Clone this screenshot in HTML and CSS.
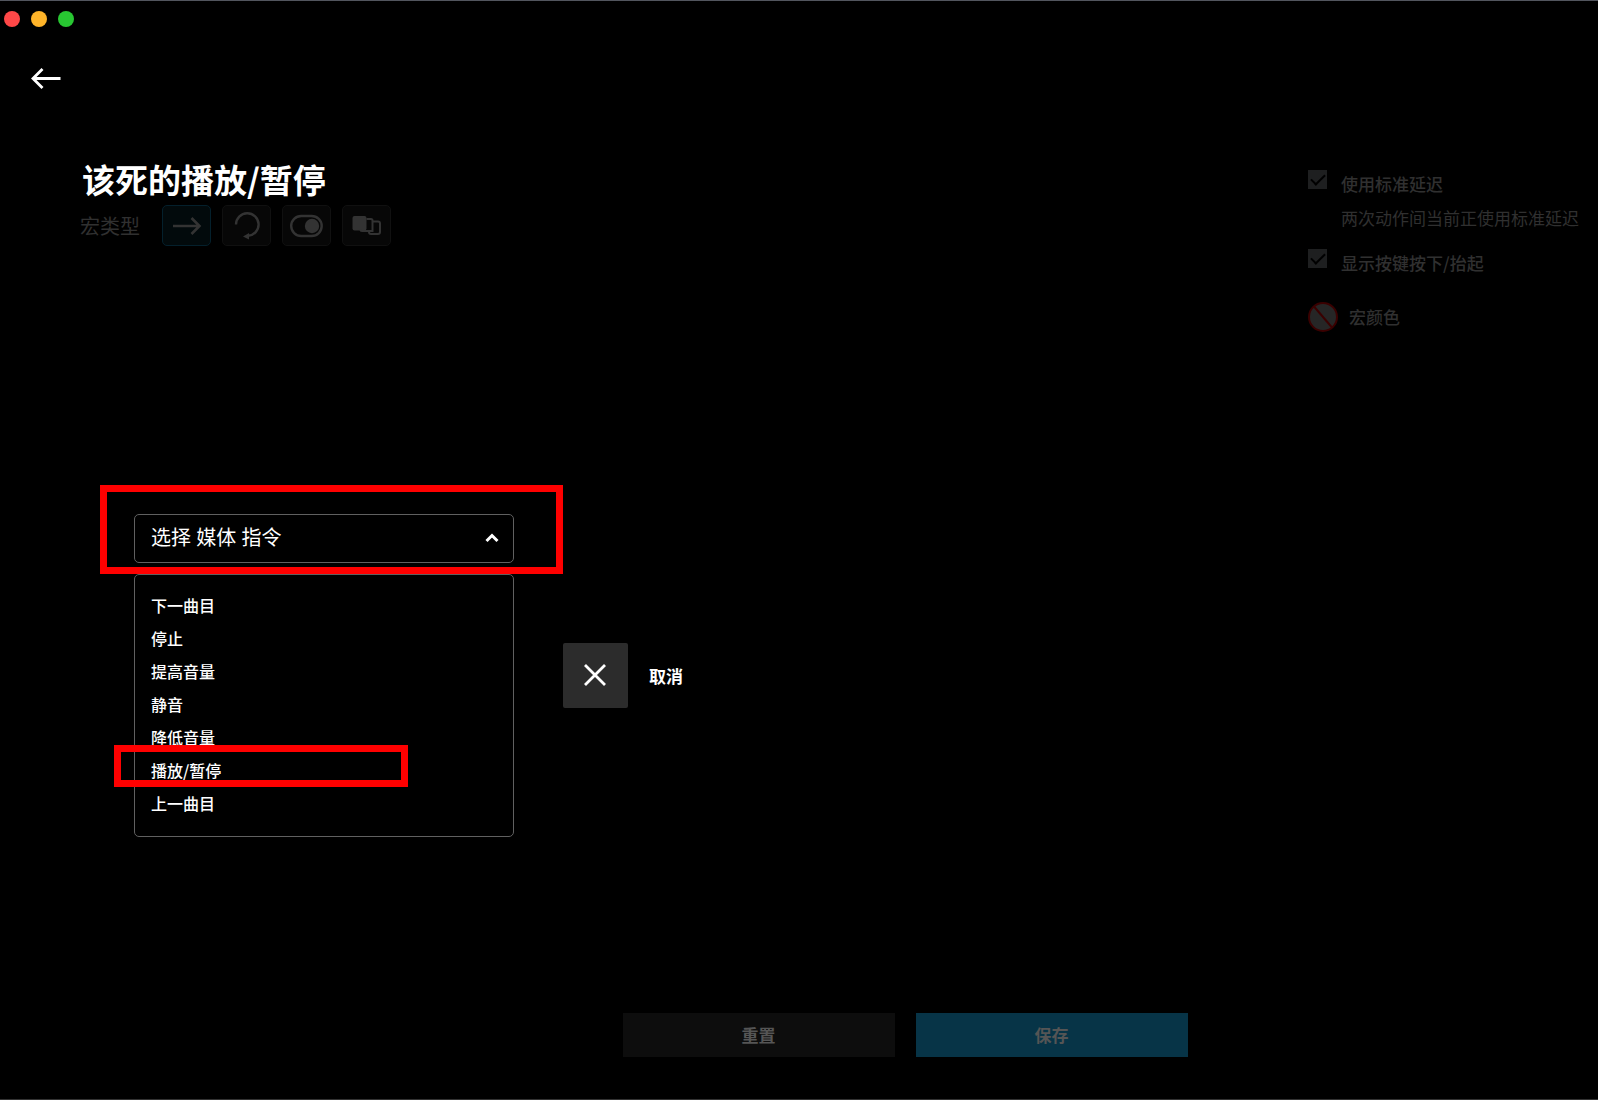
FILE: index.html
```html
<!DOCTYPE html>
<html lang="zh-CN">
<head>
    <meta charset="UTF-8">
    <meta name="viewport" content="width=device-width, initial-scale=1.0">
    <title>宏编辑</title>
    <link rel="stylesheet" href="styles.css">
</head>
<body>
    <div class="window">
        <header class="topbar">
            <div class="traffic">
                <span class="dot dot-close"></span>
                <span class="dot dot-min"></span>
                <span class="dot dot-max"></span>
            </div>
            <button type="button" class="back" aria-label="返回">
                <svg width="30" height="22" viewBox="0 0 30 22" fill="none" stroke="#fff" stroke-width="2.8"><path d="M29.500 10.500H2M11.500 1L2 10.500l9.500 9.500"/></svg>
            </button>
        </header>

        <main>
            <div class="info">
                <section class="macro">
                    <h1>该死的播放/暂停</h1>
                    <div class="types">
                        <span class="types-label">宏类型</span>
                        <button type="button" class="type active" aria-label="不重复">
                            <svg width="30" height="20" viewBox="0 0 30 20" fill="none" stroke="#333" stroke-width="2.600"><path d="M1 10h27M19.500 2L27.500 10l-8 8"/></svg>
                        </button>
                        <button type="button" class="type" aria-label="按住时重复">
                            <svg width="28" height="30" viewBox="0 0 28 30" fill="none" stroke="#333" stroke-width="2.400"><path d="M3 13.500a11.300 11.300 0 1 1 12 11.300"/><path d="M10 25.500l6-3.500v6.500z" fill="#333" stroke="none"/></svg>
                        </button>
                        <button type="button" class="type" aria-label="切换">
                            <svg width="34" height="24" viewBox="0 0 34 24" fill="none" stroke="#333" stroke-width="2.400"><rect x="1.200" y="2" width="30.500" height="20" rx="10"/><circle cx="22" cy="12" r="7.200" fill="#333" stroke="none"/></svg>
                        </button>
                        <button type="button" class="type" aria-label="序列">
                            <svg width="30" height="22" viewBox="0 0 30 22" fill="none" stroke="#333" stroke-width="2"><rect x="0.500" y="1" width="14" height="14.500" rx="2" fill="#333" stroke="none"/><path d="M14.500 4H19a1.500 1.500 0 0 1 1.500 1.500V16H10a1.500 1.500 0 0 1-1.500-1.500"/><path d="M20.500 6.500H26a2 2 0 0 1 2 2v8.500a2 2 0 0 1-2 2h-7a2 2 0 0 1-2-2v-1"/></svg>
                        </button>
                    </div>
                </section>

                <section class="options">
                    <div class="option">
                        <input type="checkbox" id="delay" checked>
                        <label for="delay">使用标准延迟</label>
                    </div>
                    <p class="hint">两次动作间当前正使用标准延迟</p>
                    <div class="option">
                        <input type="checkbox" id="keys" checked>
                        <label for="keys">显示按键按下/抬起</label>
                    </div>
                    <button type="button" class="color">
                        <svg width="30" height="30" viewBox="0 0 30 30" stroke="#3a0000" stroke-width="2"><circle cx="15" cy="15" r="14" fill="#262626"/><path d="M6 4.500L24 25.500"/></svg>
                        宏颜色
                    </button>
                </section>
            </div>

            <section class="command">
                <div class="picker">
                    <div class="select-box">
                        <select aria-label="选择 媒体 指令">
                            <option>选择 媒体 指令</option>
                        </select>
                        <svg class="chevron" width="14" height="10" viewBox="0 0 14 10" fill="none" stroke="#fff" stroke-width="3"><path d="M1.500 8L7 2.500 12.500 8"/></svg>
                        <span class="mark mark-select"></span>
                    </div>
                    <ul class="menu">
                        <li><button type="button">下一曲目</button></li>
                        <li><button type="button">停止</button></li>
                        <li><button type="button">提高音量</button></li>
                        <li><button type="button">静音</button></li>
                        <li><button type="button">降低音量</button></li>
                        <li><button type="button">播放/暂停</button><span class="mark mark-item"></span></li>
                        <li><button type="button">上一曲目</button></li>
                    </ul>
                </div>
                <button type="button" class="cancel">
                    <span class="cancel-icon">
                        <svg width="23" height="23" viewBox="0 0 23 23" fill="none" stroke="#fff" stroke-width="2.800"><path d="M1 1l20 20M21 1L1 21"/></svg>
                    </span>
                    取消
                </button>
            </section>
        </main>

        <footer>
            <button type="button" class="btn btn-reset">重置</button>
            <button type="button" class="btn btn-save">保存</button>
        </footer>
    </div>
</body>
</html>
```

FILE: styles.css
```css
* {
    box-sizing: border-box;
}
body {
    margin: 0;
    background-color: #000;
    color: #fff;
    font-family: "Noto Sans CJK SC", "Noto Sans", sans-serif;
    font-size: 17px;
    line-height: 24px;
}
button {
    padding: 0;
    border: none;
    background: none;
    color: inherit;
    font: inherit;
    cursor: pointer;
}
svg {
    display: block;
}
.window {
    display: flex;
    flex-direction: column;
    min-height: 100vh;
    border-top: 1px solid #52555e;
    border-bottom: 1px solid #333;
}

/* title bar */
.traffic {
    display: flex;
    gap: 11px;
    padding: 10px 4px;
}
.dot {
    width: 16px;
    height: 16px;
    border-radius: 50%;
}
.dot-close {
    background-color: #ff4848;
}
.dot-min {
    background-color: #ffb429;
}
.dot-max {
    background-color: #28c732;
}
.back {
    margin: 31px 0 0 31px;
}

main {
    flex: 1;
}
.info {
    display: flex;
    justify-content: space-between;
    padding: 62px 19px 0 80px;
}
h1 {
    margin: 0 0 4px 2px;
    font-size: 33px;
    line-height: 44px;
}
.types {
    display: flex;
    align-items: center;
    gap: 11px;
}
.types-label {
    margin-right: 11px;
    color: #303030;
    font-size: 20px;
}
.type {
    display: flex;
    align-items: center;
    justify-content: center;
    width: 49px;
    height: 41px;
    border: 1px solid #101010;
    border-radius: 5px;
    background-color: #070707;
}
.type.active {
    border-color: #04202c;
    background-color: #020a0c;
}

/* right column */
.options {
    padding-top: 13px;
    color: #303030;
}
.option {
    display: flex;
    gap: 14px;
    font-weight: 500;
}
.option label {
    padding-top: 2px;
}
.option input {
    display: grid;
    place-items: center;
    width: 19px;
    height: 19px;
    margin: 0;
    appearance: none;
    background-color: #1e1f20;
}
.option input:checked::after {
    content: "";
    width: 12px;
    height: 6px;
    margin-bottom: 3px;
    border-left: 2px solid #000;
    border-bottom: 2px solid #000;
    transform: rotate(-45deg);
}
.hint {
    margin: 10px 0 19px 33px;
}
.color {
    display: flex;
    align-items: center;
    gap: 11px;
    margin-top: 27px;
    font-weight: 500;
}

/* command picker */
.command {
    display: flex;
    align-items: center;
    gap: 49px;
    padding: 182px 0 0 134px;
}
.picker {
    width: 380px;
}
.select-box {
    position: relative;
}
select {
    display: block;
    width: 100%;
    height: 49px;
    padding: 0 16px 2px;
    appearance: none;
    border: 1px solid #606060;
    border-radius: 5px;
    background-color: #000;
    color: #fff;
    font-family: "Noto Sans", "Noto Sans CJK SC", sans-serif;
    font-size: 20px;
}
.chevron {
    position: absolute;
    top: 19px;
    right: 15px;
}
.menu {
    margin: 11px 0 0;
    padding: 14px 16px 16px;
    border: 1px solid #606060;
    border-radius: 5px;
    list-style: none;
    font-size: 16px;
    font-weight: 500;
}
.menu li {
    position: relative;
}
.menu button {
    display: block;
    width: 100%;
    line-height: 33px;
    text-align: left;
}
.cancel {
    display: flex;
    align-items: center;
    gap: 21px;
    font-weight: bold;
}
.cancel-icon {
    display: grid;
    place-items: center;
    width: 65px;
    height: 65px;
    border-radius: 2px;
    background-color: #2c2c2c;
}

/* red frames over the steps */
.mark {
    position: absolute;
    z-index: 1;
    border: 7px solid #f00;
    pointer-events: none;
}
.mark-select {
    top: -29px;
    right: -49px;
    bottom: -11px;
    left: -34px;
}
.mark-item {
    top: -9px;
    left: -37px;
    width: 294px;
    height: 42px;
}

footer {
    display: flex;
    justify-content: center;
    gap: 21px;
    padding: 0 0 42px 212px;
}
.btn {
    width: 272px;
    height: 44px;
    color: #555;
    font-weight: bold;
}
.btn-reset {
    background-color: #0d0d0d;
}
.btn-save {
    background-color: #073447;
}
```
